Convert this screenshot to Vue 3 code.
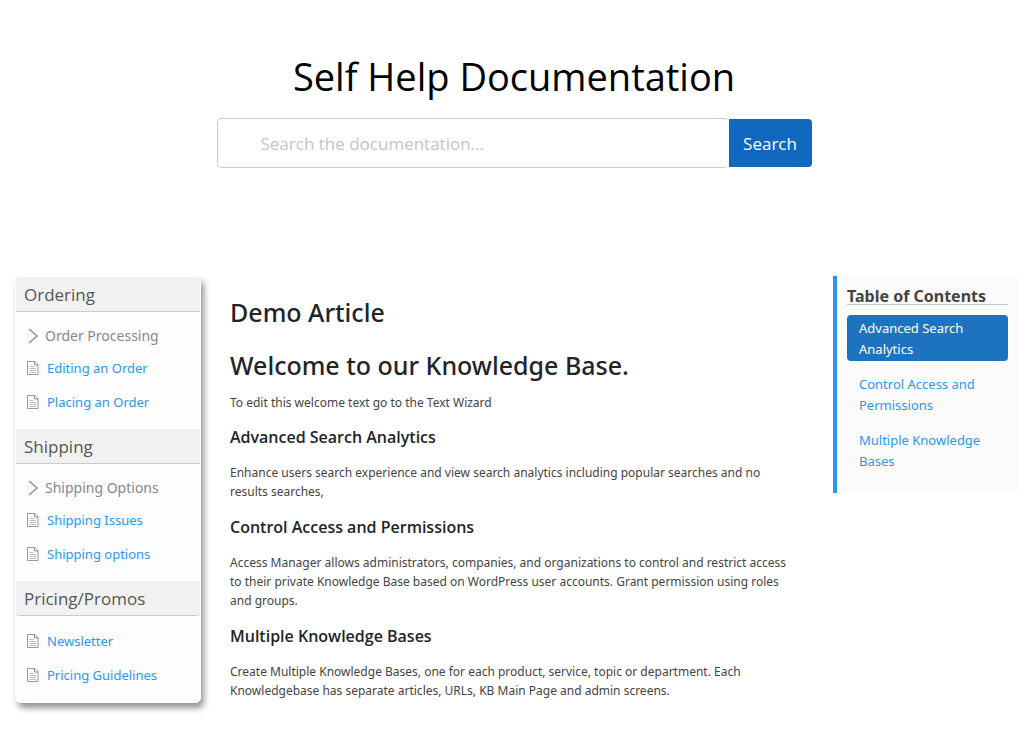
<script setup>
import { ref } from 'vue'

const query = ref('')
const categories = [
  { title: 'Ordering', sub: 'Order Processing', articles: ['Editing an Order', 'Placing an Order'] },
  { title: 'Shipping', sub: 'Shipping Options', articles: ['Shipping Issues', 'Shipping options'] },
  { title: 'Pricing/Promos', sub: '', articles: ['Newsletter', 'Pricing Guidelines'] },
]
const sections = [
  {
    id: 'analytics',
    title: 'Advanced Search Analytics',
    text: 'Enhance users search experience and view search analytics including popular searches and no results searches,',
  },
  {
    id: 'access',
    title: 'Control Access and Permissions',
    text: 'Access Manager allows administrators, companies, and organizations to control and restrict access to their private Knowledge Base based on WordPress user accounts. Grant permission using roles and groups.',
  },
  {
    id: 'bases',
    title: 'Multiple Knowledge Bases',
    text: 'Create Multiple Knowledge Bases, one for each product, service, topic or department. Each Knowledgebase has separate articles, URLs, KB Main Page and admin screens.',
  },
]
const active = ref('analytics')
</script>

<template>
  <div class="page">
    <header class="hero">
      <h1>Self Help Documentation</h1>
      <form class="search" role="search" @submit.prevent>
        <input v-model="query" type="text" aria-label="Search the documentation" placeholder="Search the documentation..." />
        <button type="submit">Search</button>
      </form>
    </header>

    <div class="columns">
      <nav class="sidebar" aria-label="Categories">
        <section v-for="cat in categories" :key="cat.title" class="category">
          <h2>{{ cat.title }}</h2>
          <div class="entries">
            <button v-if="cat.sub" type="button" class="sub">
              <svg width="11" height="16" viewBox="0 0 11 16" fill="none" stroke="#8a8a8a" stroke-width="1.3" aria-hidden="true">
                <path d="M2 1l8 7-8 7" />
              </svg>
              <span>{{ cat.sub }}</span>
            </button>
            <a v-for="a in cat.articles" :key="a" href="#" class="entry">
              <svg width="12" height="14" viewBox="0 0 12 14" fill="none" aria-hidden="true">
                <path d="M.5.5h7.500l3 3v10H.5z" fill="#fff" stroke="#999" />
                <path d="M7.500.5v3.500h3.500" stroke="#8d8d8d" />
                <path d="M2.500 5.500h4M2.500 7.500h6.500M2.500 9.500h6.500M2.500 11.500h6.500" stroke="#bdbdbd" />
              </svg>
              <span>{{ a }}</span>
            </a>
          </div>
        </section>
      </nav>

      <main class="article">
        <h1>Demo Article</h1>
        <h2>Welcome to our Knowledge Base.</h2>
        <p>To edit this welcome text go to the Text Wizard</p>
        <section v-for="s in sections" :id="s.id" :key="s.id">
          <h3>{{ s.title }}</h3>
          <p>{{ s.text }}</p>
        </section>
      </main>

      <aside class="toc">
        <h2>Table of Contents</h2>
        <nav aria-label="Table of Contents">
          <a v-for="s in sections" :key="s.id" :href="'#' + s.id" :class="{ active: s.id === active }" @click="active = s.id">{{ s.title }}</a>
        </nav>
      </aside>
    </div>
  </div>
</template>

<style>
body {
  background: #fff;
}
</style>

<style scoped>
.page {
  font-family: "Noto Sans", "Open Sans", sans-serif;
  color: #444;
}
.page * {
  box-sizing: border-box;
}
h1, h2, h3, p {
  margin: 0;
}
.hero {
  display: flex;
  flex-direction: column;
  align-items: center;
  padding: 48px 16px 108px;
  font-family: "Open Sans", sans-serif;
}
.hero h1 {
  font-size: 38px;
  line-height: 56px;
  font-weight: 400;
  color: #000;
}
.search {
  display: flex;
  width: 100%;
  max-width: 595px;
  height: 50px;
  margin-top: 14px;
}
.search input {
  flex: 1;
  min-width: 0;
  padding: 0 43px;
  border: 1px solid #ccc;
  border-right: 0;
  border-radius: 5px;
  background: #fff;
  font: inherit;
  font-size: 17px;
  color: #444;
}
.search input::placeholder {
  color: #c4c4c4;
  opacity: 1;
}
.search button {
  width: 83px;
  margin: 1px 0;
  padding: 0;
  border: 0;
  border-radius: 0 4px 4px 0;
  background: #1168bf;
  color: #fff;
  font: inherit;
  font-size: 17px;
}
.columns {
  display: grid;
  grid-template-columns: 186px minmax(0, 1fr) 185px;
  gap: 29px;
  align-items: start;
  padding: 0 10px 32px 15px;
}
.sidebar {
  border: 1px solid #fdfdfd;
  background: #fdfdfd;
  border-radius: 5px;
  box-shadow: 3px 5px 6px 0 rgba(0, 0, 0, 0.42);
}
.category h2 {
  height: 35px;
  padding: 0 8px;
  border-bottom: 1px solid #ccc;
  background: #f1f1f1;
  font-family: "Open Sans", sans-serif;
  font-size: 17px;
  line-height: 36px;
  font-weight: 400;
  color: #555;
}
.category:first-child h2 {
  border-radius: 4px 4px 0 0;
}
.category:last-child h2 {
  border-radius: 0 0 4px 4px;
}
.entries {
  display: flex;
  flex-direction: column;
  padding: 8px 11px 10px;
}
.sub {
  display: flex;
  align-items: center;
  gap: 7px;
  height: 31px;
  padding: 0;
  border: 0;
  background: none;
  font: inherit;
  font-size: 14px;
  color: #888;
  text-align: left;
}
.entry {
  display: flex;
  align-items: center;
  gap: 8px;
  height: 34px;
  font-size: 13px;
  color: #2b98ed;
  text-decoration: none;
}
.article {
  padding: 18px 10px 0 0;
}
.article h1,
.article h2 {
  font-size: 25px;
  line-height: 36px;
  font-weight: 500;
  color: #212529;
}
.article h2 {
  margin-top: 17px;
}
.article h3 {
  margin-bottom: 16px;
  font-family: "Open Sans", sans-serif;
  font-size: 16px;
  line-height: 20px;
  font-weight: 600;
  color: #212529;
}
.article p {
  font-size: 12px;
  line-height: 19px;
}
.article h2 + p {
  margin: 10px 0 15px;
}
.article section {
  margin-bottom: 16px;
}
.toc {
  min-height: 217px;
  padding: 9px 10px;
  border-left: 4px solid #2b98e4;
  background: #fbfbfb;
}
.toc h2 {
  height: 20px;
  border-bottom: 1px solid #c5cbc5;
  font-size: 16px;
  line-height: 22px;
  font-weight: 700;
  color: #444;
}
.toc nav {
  display: flex;
  flex-direction: column;
  gap: 10px;
  margin-top: 10px;
}
.toc a {
  padding: 3px 12px 1px;
  border-radius: 4px;
  font-size: 13px;
  line-height: 21px;
  color: #2b98ed;
  text-decoration: none;
}
.toc a.active {
  background: #1e73be;
  color: #fff;
}
</style>
